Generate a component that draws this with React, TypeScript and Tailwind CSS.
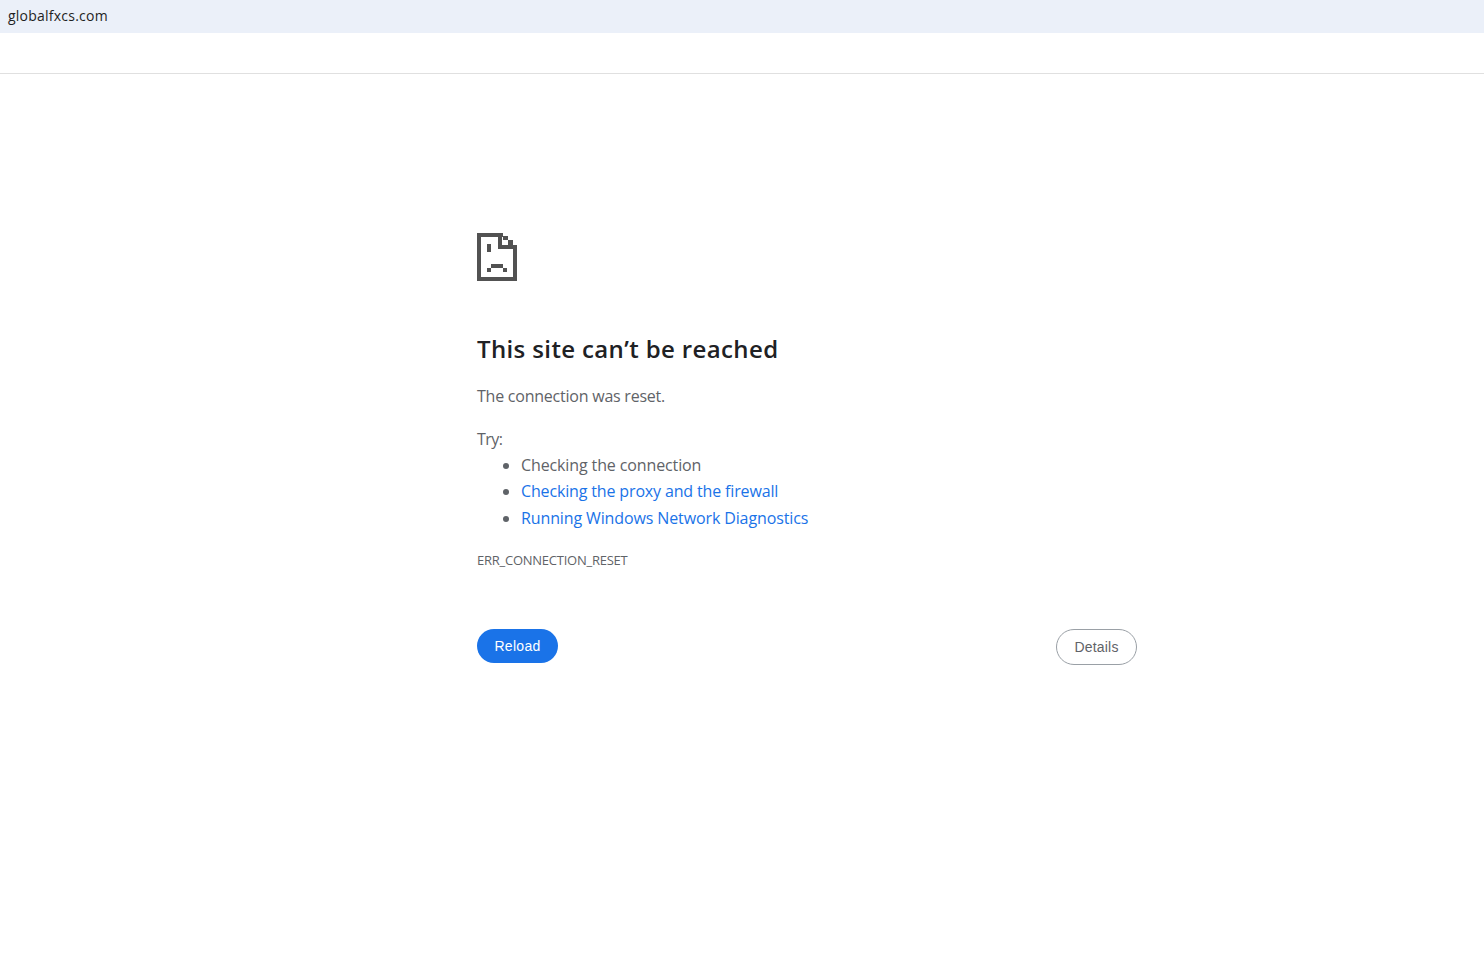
import React from 'react';

function SadFile() {
  return (
    <svg width="40" height="48" viewBox="0 0 40 48" fill="#525252" shapeRendering="crispEdges" className="block">
      {/* page outline */}
      <rect x="0" y="0" width="4" height="48" />
      <rect x="0" y="0" width="26" height="4" />
      <rect x="36" y="12" width="4" height="36" />
      <rect x="0" y="44" width="40" height="4" />
      {/* folded corner */}
      <rect x="21" y="0" width="4" height="16" />
      <rect x="21" y="12" width="19" height="4" />
      <rect x="26" y="3" width="5" height="4" />
      <rect x="31" y="7" width="5" height="5" />
      {/* eye */}
      <rect x="10" y="11" width="4" height="8" />
      {/* mouth */}
      <rect x="14" y="31" width="12" height="4" />
      <rect x="10" y="35" width="4" height="4" />
      <rect x="26" y="35" width="4" height="4" />
    </svg>
  );
}

export default function App() {
  return (
    <div className="min-h-[975px] bg-white font-['Open_Sans','Noto_Sans',sans-serif]">
      <div className="h-[33px] bg-[#ebf0f9] pl-2 pb-[2px] flex items-center text-[14px] text-[#1f1f1f] tracking-[0.23px]">
        globalfxcs.com
      </div>
      <div className="h-[41px] border-b border-[#e0e0e0]" />

      <div className="w-[660px] ml-[477px] pt-[159px]">
        <SadFile />
        <h1 className="mt-[52px] text-[24px] leading-[32px] font-semibold text-[#202124] tracking-[0.37px]">
          This site can’t be reached
        </h1>
        <p className="mt-[18px] text-[16px] leading-[26px] text-[#5f6368] tracking-[-0.23px]">
          The connection was reset.
        </p>
        <p className="mt-[17px] text-[16px] leading-[26px] text-[#5f6368] tracking-[-0.5px]">Try:</p>
        <ul className="list-disc pl-[44px] text-[16px] leading-[26.4px] text-[#5f6368] tracking-[-0.12px]">
          <li>Checking the connection</li>
          <li><a className="text-[#1a73e8] tracking-[-0.15px]">Checking the proxy and the firewall</a></li>
          <li><a className="text-[#1a73e8]">Running Windows Network Diagnostics</a></li>
        </ul>
        <div className="mt-[19px] text-[13px] leading-[20px] text-[#5f6368] tracking-[-0.25px]">ERR_CONNECTION_RESET</div>

        <div className="mt-[59px] flex justify-between items-start font-['Liberation_Sans',sans-serif]">
          <button className="w-[81px] h-[34px] rounded-full bg-[#1a73e8] text-white text-[14px] tracking-[0.3px]">Reload</button>
          <button className="w-[81px] h-[36px] rounded-full border border-[#9aa0a6] text-[#5f6368] text-[14px] tracking-[0.2px]">Details</button>
        </div>
      </div>
    </div>
  );
}
